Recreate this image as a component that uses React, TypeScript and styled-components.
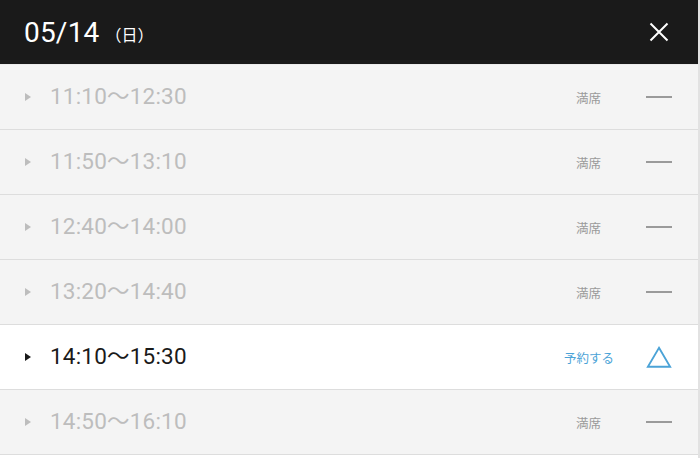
import React from "react";
import styled, { createGlobalStyle } from "styled-components";

interface ISlot {
    time: string;
    available: boolean;
}

const SLOTS: ISlot[] = [
    { time: "11:10〜12:30", available: false },
    { time: "11:50〜13:10", available: false },
    { time: "12:40〜14:00", available: false },
    { time: "13:20〜14:40", available: false },
    { time: "14:10〜15:30", available: true },
    { time: "14:50〜16:10", available: false },
];

const GlobalStyle = createGlobalStyle`
    html, body {
        margin: 0;
        padding: 0;
        background: #fff;
        font-family: Roboto, "Noto Sans CJK JP", sans-serif;
    }
`;

const Panel = styled.div`
    width: 700px;
    height: 458px;
    box-sizing: border-box;
    border-right: 2px solid #e2e2e2;
    overflow: hidden;
`;

const Header = styled.div`
    display: flex;
    align-items: center;
    height: 64px;
    padding: 0 29px 0 24px;
    background: #1a1a1a;
    color: #fff;
`;

const DateText = styled.span`
    font-size: 28px;
    letter-spacing: 0.2px;
`;

const DayText = styled.span`
    font-size: 16px;
    margin-left: 6px;
    margin-top: 3px;
    font-family: "Noto Sans CJK JP", sans-serif;
`;

const CloseButton = styled.button`
    margin-left: auto;
    display: flex;
    padding: 0;
    border: none;
    background: none;
    color: #fff;
    cursor: pointer;
`;

const List = styled.ul`
    list-style: none;
    margin: 0;
    padding: 0;
    border-top: 1px solid #ececec;
`;

const Row = styled.li<{ $active: boolean }>`
    display: flex;
    align-items: center;
    height: 64px;
    border-bottom: 1px solid #dddddd;
    padding: 0 26px 0 24px;
    background: ${(p) => (p.$active ? "#fff" : "#f4f4f4")};
    color: ${(p) => (p.$active ? "#1a1a1a" : "#bdbdbd")};
`;

const Caret = styled.span<{ $active: boolean }>`
    width: 0;
    height: 0;
    border-top: 4.5px solid transparent;
    border-bottom: 4.5px solid transparent;
    border-left: 6px solid ${(p) => (p.$active ? "#1a1a1a" : "#bdbdbd")};
    margin-left: 1px;
    margin-right: 19px;
`;

const Time = styled.span`
    font-size: 22.5px;
    line-height: 1;
    letter-spacing: 0.2px;
    margin-bottom: 2px;
`;

const Status = styled.span<{ $active: boolean }>`
    margin-left: auto;
    font-family: "Noto Sans CJK JP", sans-serif;
    font-size: 12.5px;
    color: ${(p) => (p.$active ? "#4ba3d7" : "#9a9a9a")};
    margin-right: ${(p) => (p.$active ? "32px" : "45px")};
`;

const Mark = styled.span`
    display: flex;
    width: 26px;
    justify-content: center;
`;

const Dash = styled.span`
    width: 26px;
    height: 2px;
    background: #9a9a9a;
`;

const TriangleMark = () => (
    <svg width="28" height="24" viewBox="0 0 28 24">
        <path d="M14 2 L26 22.5 H2 Z" fill="none" stroke="#4ba3d7" strokeWidth="2" />
    </svg>
);

export default function App() {
    return (
        <Panel>
            <GlobalStyle />
            <Header>
                <DateText>05/14</DateText>
                <DayText>（日）</DayText>
                <CloseButton aria-label="close">
                    <svg width="20" height="20" viewBox="0 0 20 20">
                        <path d="M1.5 1.5 L18.5 18.5 M18.5 1.5 L1.5 18.5" stroke="#fff" strokeWidth="2" />
                    </svg>
                </CloseButton>
            </Header>
            <List>
                {SLOTS.map((slot) => (
                    <Row key={slot.time} $active={slot.available}>
                        <Caret $active={slot.available} />
                        <Time>{slot.time}</Time>
                        <Status $active={slot.available}>{slot.available ? "予約する" : "満席"}</Status>
                        <Mark>{slot.available ? <TriangleMark /> : <Dash />}</Mark>
                    </Row>
                ))}
            </List>
        </Panel>
    );
}
